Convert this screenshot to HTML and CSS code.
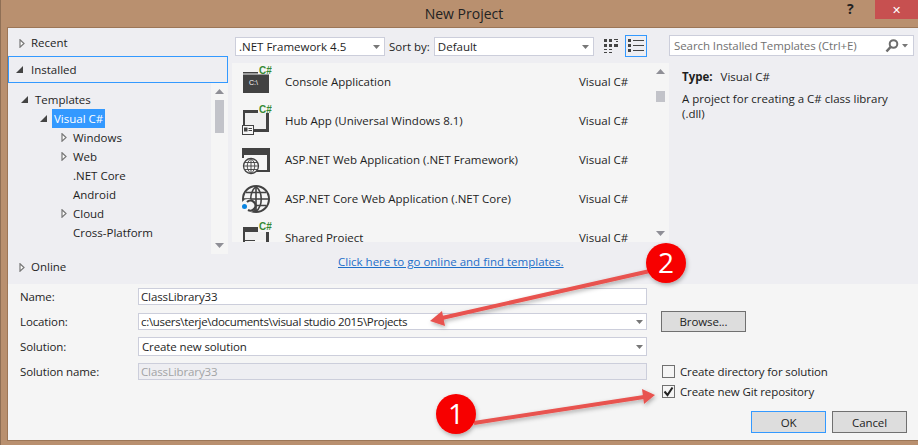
FILE: index.html
```html
<!DOCTYPE html>
<html lang="en">
<head>
  <meta charset="UTF-8">
  <title>New Project</title>
  <link rel="stylesheet" href="styles.css">
</head>
<body>

<svg width="0" height="0" class="defs">
  <symbol id="closed" viewBox="0 0 6 9"><path d="M1 .8 5 4.5 1 8.2Z" fill="#fff" stroke="#777" stroke-width="1.2"/></symbol>
  <symbol id="open" viewBox="0 0 7 7"><path d="M7 0V7H0Z" fill="#444"/></symbol>
  <symbol id="up" viewBox="0 0 9 5"><path d="M4.5 0 9 5H0Z" fill="#8f8f96"/></symbol>
  <symbol id="down" viewBox="0 0 9 5"><path d="M0 0H9L4.5 5Z" fill="#8f8f96"/></symbol>
  <symbol id="caret" viewBox="0 0 7 4"><path d="M0 0H7L3.5 4Z" fill="#777"/></symbol>
</svg>

<div class="titlebar">
  <div class="title">New Project</div>
  <div class="help">?</div>
  <div class="close">✕</div>
</div>

<div class="dialog">
  <div class="top">
    <!-- left column -->
    <div class="left">
      <div class="section recent"><svg class="arrow-closed"><use href="#closed"/></svg><span>Recent</span></div>
      <div class="section installed"><svg class="arrow-open"><use href="#open"/></svg><span>Installed</span></div>
      <div class="tree-wrap">
        <div class="tree">
          <div class="node lvl1"><svg class="arrow-open"><use href="#open"/></svg><span>Templates</span></div>
          <div class="node lvl2"><svg class="arrow-open"><use href="#open"/></svg><span class="selected">Visual C#</span></div>
          <div class="node lvl3"><svg class="arrow-closed"><use href="#closed"/></svg><span>Windows</span></div>
          <div class="node lvl3"><svg class="arrow-closed"><use href="#closed"/></svg><span>Web</span></div>
          <div class="node lvl3"><i class="no-arrow"></i><span>.NET Core</span></div>
          <div class="node lvl3"><i class="no-arrow"></i><span>Android</span></div>
          <div class="node lvl3"><svg class="arrow-closed"><use href="#closed"/></svg><span>Cloud</span></div>
          <div class="node lvl3"><i class="no-arrow"></i><span>Cross-Platform</span></div>
        </div>
        <div class="scrollbar tree-scroll">
          <svg class="sb-arrow"><use href="#up"/></svg>
          <div class="thumb tree-thumb"></div>
          <svg class="sb-arrow sb-end"><use href="#down"/></svg>
        </div>
      </div>
      <div class="section online"><svg class="arrow-closed"><use href="#closed"/></svg><span>Online</span></div>
    </div>

    <!-- middle column -->
    <div class="middle">
      <div class="toolbar">
        <div class="combo framework"><span>.NET Framework 4.5</span><svg class="caret"><use href="#caret"/></svg></div>
        <span class="sort-label">Sort by:</span>
        <div class="combo sort"><span>Default</span><svg class="caret"><use href="#caret"/></svg></div>
        <div class="view-btn">
          <svg width="14" height="16" viewBox="0 0 14 16" fill="#444"><path d="M0 1h3v3H0zM5 1h3v3H5zM10 1h4v1h-4zM12 3h2v1h-2zM0 6h3v3H0zM5 6h3v3H5zM10 6h4v3h-4zM0 11h3v1H0zM0 14h3v1H0zM5 11h3v1H5zM5 14h3v1H5z"/></svg>
        </div>
        <div class="view-btn active">
          <svg width="16" height="14" viewBox="0 0 16 14" fill="#444"><path d="M0 0h3v3H0zM0 5h3v3H0zM0 10h3v3H0zM5 1h11v1H5zM5 6h11v1H5zM5 11h11v1H5z"/></svg>
        </div>
      </div>
      <div class="list-wrap">
        <div class="list">
          <div class="row">
            <div class="row-icon">
              <svg width="30" height="39" viewBox="0 -4 30 39"><path d="M1 5h15v1.500H1zM1 7.500h26V26H1z" fill="#424242"/><text x="7" y="18" class="prompt">C:\</text><text x="17" y="7" class="lang">C#</text></svg>
            </div>
            <div class="row-name">Console Application</div>
            <div class="row-lang">Visual C#</div>
          </div>
          <div class="row">
            <div class="row-icon">
              <svg width="30" height="39" viewBox="0 -4 30 39"><rect x="2" y="6" width="22" height="17" fill="#efefef"/><path d="M1 4h15v3h11v19H12v-3h12V7H3v12H1z" fill="#424242"/><rect x=".5" y="19.500" width="11" height="9" fill="#f5f5f5" stroke="#424242"/><path d="M2 21.500h3.500v4H2zM6.500 22h3.500v1H6.500zM6.500 24h3.500v1H6.500z" fill="#424242"/><text x="17" y="7" class="lang">C#</text></svg>
            </div>
            <div class="row-name">Hub App (Universal Windows 8.1)</div>
            <div class="row-lang">Visual C#</div>
          </div>
          <div class="row">
            <div class="row-icon">
              <svg width="30" height="39" viewBox="0 -4 30 39"><rect x="2" y="9" width="24" height="16" fill="#f5f5f5"/><path d="M0 3h28v24H13v-2h12V10H2v3H0z" fill="#424242"/><circle cx="9" cy="21" r="7.500" fill="#f5f5f5" stroke="#424242" stroke-width="1.300"/><path d="M1.500 21h15M9 13.500v15M9 13.500c-5 4-5 11 0 15M9 13.500c5 4 5 11 0 15M3 17.500h12M3 24.500h12" fill="none" stroke="#424242" stroke-width=".9"/></svg>
            </div>
            <div class="row-name">ASP.NET Web Application (.NET Framework)</div>
            <div class="row-lang">Visual C#</div>
          </div>
          <div class="row">
            <div class="row-icon">
              <svg width="30" height="39" viewBox="0 -4 30 39"><circle cx="14" cy="15" r="13" fill="none" stroke="#424242" stroke-width="2"/><path d="M2 15h24M14 2.500v25M14 2.500c-7 6-7 19 0 25M14 2.500c7 6 7 19 0 25M4 8.500h20M4 21.500h20" fill="none" stroke="#424242" stroke-width="1.600"/><circle cx="6" cy="22" r="7" fill="#f5f5f5"/><path d="M5 18a5 5 0 1 1 1 8" fill="none" stroke="#424242" stroke-width="2.200"/><circle cx="2.500" cy="22.500" r="2.500" fill="#0a84e0"/></svg>
            </div>
            <div class="row-name">ASP.NET Core Web Application (.NET Core)</div>
            <div class="row-lang">Visual C#</div>
          </div>
          <div class="row">
            <div class="row-icon">
              <svg width="30" height="39" viewBox="0 -4 30 39"><path d="M1 4h15v5h11v21h-3V9H3v8h10v1H3v12H1z" fill="#424242"/><rect x="3" y="9" width="21" height="8" fill="#efefef"/><text x="17" y="7" class="lang">C#</text></svg>
            </div>
            <div class="row-name">Shared Project</div>
            <div class="row-lang">Visual C#</div>
          </div>
        </div>
        <div class="scrollbar list-scroll">
          <svg class="sb-arrow"><use href="#up"/></svg>
          <div class="thumb list-thumb"></div>
          <svg class="sb-arrow sb-end"><use href="#down"/></svg>
        </div>
      </div>
      <div class="online-link"><a href="#">Click here to go online and find templates.</a></div>
    </div>

    <!-- right column -->
    <div class="right">
      <div class="search">
        <span>Search Installed Templates (Ctrl+E)</span>
        <svg width="24" height="14" viewBox="0 0 24 14"><circle cx="8.500" cy="5" r="3.800" fill="none" stroke="#6d6d6d" stroke-width="2"/><path d="M6 7.500 1.500 12.500" stroke="#6d6d6d" stroke-width="2.600"/><path d="M17 5h6l-3 3.500z" fill="#777"/></svg>
      </div>
      <div class="info">
        <div class="info-type"><b>Type:</b><span>Visual C#</span></div>
        <div class="info-desc">A project for creating a C# class library (.dll)</div>
      </div>
    </div>
  </div>

  <div class="bottom">
    <div class="fields">
      <label class="field-row name-row"><span>Name:</span><div class="input plain">ClassLibrary33</div></label>
      <label class="field-row"><span>Location:</span><div class="input plain path">c:\users\terje\documents\visual studio 2015\Projects<svg class="caret"><use href="#caret"/></svg></div></label>
      <label class="field-row tall"><span>Solution:</span><div class="input">Create new solution<svg class="caret"><use href="#caret"/></svg></div></label>
      <label class="field-row"><span>Solution name:</span><div class="input plain disabled">ClassLibrary33</div></label>
    </div>
    <div class="side">
      <div class="btn browse">Browse...</div>
      <div class="check"><i class="box"></i><span>Create directory for solution</span></div>
      <div class="check"><i class="box"><svg width="11" height="11" viewBox="0 0 11 11"><path d="M1.500 5.500 4.500 9 9.500 1.500" fill="none" stroke="#222" stroke-width="2"/></svg></i><span>Create new Git repository</span></div>
      <div class="actions">
        <div class="btn ok">OK</div>
        <div class="btn">Cancel</div>
      </div>
    </div>
  </div>
</div>

<!-- red annotations drawn on top of the screenshot -->
<svg class="notes" width="918" height="445" viewBox="0 0 918 445">
  <defs>
    <filter id="soft" x="-20%" y="-20%" width="140%" height="140%"><feDropShadow dx="1" dy="2" stdDeviation="2" flood-color="#000" flood-opacity=".3"/></filter>
  </defs>
  <g filter="url(#soft)">
    <path d="M650 271 442 318" stroke="#e8534f" stroke-width="4"/>
    <path d="M430 321 442 311 445 326Z" fill="#e8534f"/>
    <path d="M474 423 644 397" stroke="#e8534f" stroke-width="4"/>
    <path d="M655 395 642 389 644 404Z" fill="#e8534f"/>
    <circle cx="666" cy="263" r="20" fill="#f70000"/>
    <circle cx="456" cy="414" r="20" fill="#f70000"/>
  </g>
  <text x="666" y="273" class="note-num">2</text>
  <text x="456" y="424" class="note-num">1</text>
</svg>

</body>
</html>
```
FILE: styles.css
```css
* {
  box-sizing: border-box;
}
body {
  margin: 0;
  width: 918px;
  height: 445px;
  overflow: hidden;
  position: relative;
  background: #b9906f;
  box-shadow: inset 1px 0 0 #8f6f55;
  font-family: "Open Sans", "Noto Sans", Arial, sans-serif;
  font-size: 11.5px;
  color: #1e1e1e;
}
.defs {
  display: block;
  height: 0;
}
.titlebar {
  height: 28px;
  display: flex;
  align-items: flex-start;
}
.title {
  flex: 1;
  padding-left: 81px;
  text-align: center;
  font-size: 14px;
  line-height: 28px;
  color: #222;
}
.help {
  width: 28px;
  font-weight: bold;
  font-size: 14px;
  line-height: 18px;
  color: #222;
}
.close {
  width: 43px;
  height: 19px;
  background: #c75050;
  color: #fff;
  font-size: 11px;
  line-height: 19px;
  text-align: center;
}
.dialog {
  margin-left: 8px;
  height: 412px;
  background: #f5f5f5;
  box-shadow: 0 0 0 1px #9c7657;
}
.top {
  display: flex;
  height: 256px;
  background: #eeeef2;
}
.left {
  width: 220px;
  display: flex;
  flex-direction: column;
}
.section {
  display: flex;
  align-items: center;
}
.section span {
  line-height: 16px;
}
.recent {
  height: 28px;
  padding: 2px 0 0 8px;
}
.installed {
  height: 27px;
  padding-left: 7px;
  border: 1px solid #3399ff;
}
.installed .arrow-open {
  margin-right: 8px;
}
.online {
  height: 30px;
  padding: 0 0 4px 8px;
}
.arrow-closed {
  width: 6px;
  height: 9px;
  margin: 0 6px 0 3px;
  flex: none;
}
.arrow-open {
  width: 7px;
  height: 7px;
  margin-right: 7px;
  flex: none;
}
.no-arrow {
  width: 15px;
  flex: none;
}
.tree-wrap {
  height: 171px;
  display: flex;
}
.tree {
  flex: 1;
  padding-top: 7px;
}
.node {
  height: 19px;
  display: flex;
  align-items: center;
}
.lvl1 {
  padding-left: 13px;
}
.lvl2 {
  padding-left: 32px;
}
.lvl3 {
  padding-left: 50px;
}
.selected {
  margin-left: -2px;
  padding: 0 2px;
  line-height: 19px;
  background: #3399ff;
  color: #fff;
}
.scrollbar {
  width: 17px;
  flex: none;
  background: #f5f5f5;
  display: flex;
  flex-direction: column;
  align-items: center;
}
.sb-arrow {
  width: 9px;
  height: 5px;
  flex: none;
  margin-top: 6px;
}
.sb-end {
  margin-top: auto;
  margin-bottom: 6px;
}
.thumb {
  width: 9px;
  background: #c2c3c9;
}
.tree-thumb {
  height: 33px;
  margin-top: 6px;
}
.middle {
  width: 441px;
  padding-left: 4px;
  display: flex;
  flex-direction: column;
}
.toolbar {
  height: 35px;
  padding: 9px 0 0 3px;
  display: flex;
  align-items: flex-start;
}
.combo {
  height: 19px;
  background: #fff;
  border: 1px solid #cccedb;
  display: flex;
  align-items: center;
  justify-content: space-between;
  padding: 0 4px 0 3px;
}
.framework {
  width: 150px;
}
.sort-label {
  margin: 0 4px;
  line-height: 19px;
}
.sort {
  width: 160px;
}
.caret {
  width: 7px;
  height: 4px;
  flex: none;
}
.view-btn {
  width: 22px;
  height: 22px;
  margin: -2px 0 0 6px;
  display: flex;
  align-items: center;
  justify-content: center;
}
.view-btn.active {
  margin-left: 3px;
  border: 1px solid #3399ff;
}
.list-wrap {
  height: 179px;
  display: flex;
  background: #f5f5f5;
}
.list {
  flex: 1;
  overflow: hidden;
}
.row {
  height: 39px;
  display: flex;
  align-items: center;
}
.row-icon {
  width: 53px;
  padding-left: 10px;
  height: 39px;
  flex: none;
}
.row-name {
  width: 294px;
  flex: none;
  margin-bottom: 2px;
}
.row-lang {
  flex: 1;
  margin-bottom: 2px;
}
.prompt {
  font: 7px "Liberation Sans", sans-serif;
  fill: #fff;
}
.lang {
  font: bold 10px "Liberation Sans", sans-serif;
  fill: #388a34;
}
.list-thumb {
  height: 11px;
  margin-top: 17px;
}
.online-link {
  flex: 1;
  padding: 12px 0 0 106px;
}
.online-link a {
  color: #1e6fc9;
}
.right {
  flex: 1;
  padding-top: 7px;
}
.search {
  width: 245px;
  height: 21px;
  background: #fff;
  border: 1px solid #cccedb;
  display: flex;
  align-items: center;
  justify-content: space-between;
  padding: 0 4px;
  color: #717171;
  letter-spacing: -.08px;
}
.info {
  padding: 13px 13px 0;
}
.info-type b {
  margin-right: 8px;
}
.info-desc {
  margin-top: 7px;
  width: 210px;
  line-height: 15px;
}
.bottom {
  height: 156px;
  display: flex;
  padding: 4px 0 0 12px;
  letter-spacing: -.12px;
}
.fields {
  width: 627px;
  display: flex;
  flex-direction: column;
  gap: 7px;
}
.field-row {
  height: 17px;
  display: flex;
  align-items: center;
}
.field-row.tall {
  height: 19px;
}
.name-row {
  margin-bottom: 1px;
}
.field-row > span {
  width: 118px;
  flex: none;
}
.input {
  flex: 1;
  height: 100%;
  background: #fff;
  border: 1px solid #cccedb;
  padding: 0 3px;
  display: flex;
  align-items: center;
  justify-content: space-between;
}
.input.plain {
  padding-left: 2px;
}
.input.path {
  letter-spacing: -.32px;
}
.input.disabled {
  background: #eeeef2;
  color: #a2a4a5;
}
.side {
  width: 246px;
  margin-left: 14px;
  display: flex;
  flex-direction: column;
  padding-top: 23px;
}
.btn {
  width: 75px;
  height: 22px;
  background: #dddddd;
  border: 1px solid #707070;
  display: flex;
  align-items: center;
  justify-content: center;
}
.browse {
  width: 85px;
  height: 21px;
}
.check {
  display: flex;
  align-items: center;
  gap: 5px;
  height: 13px;
  margin-top: 7px;
}
.browse + .check {
  margin-top: 33px;
}
.box {
  width: 13px;
  height: 13px;
  margin-left: 1px;
  background: #f5f5f5;
  border: 1px solid #707070;
  display: flex;
  align-items: center;
  justify-content: center;
}
.actions {
  display: flex;
  gap: 6px;
  margin-top: 13px;
  padding-left: 90px;
}
.ok {
  border-color: #3399ff;
}
.notes {
  position: absolute;
  left: 0;
  top: 0;
}
.note-num {
  font: 28px "Open Sans", sans-serif;
  fill: #fff;
  text-anchor: middle;
}
```
